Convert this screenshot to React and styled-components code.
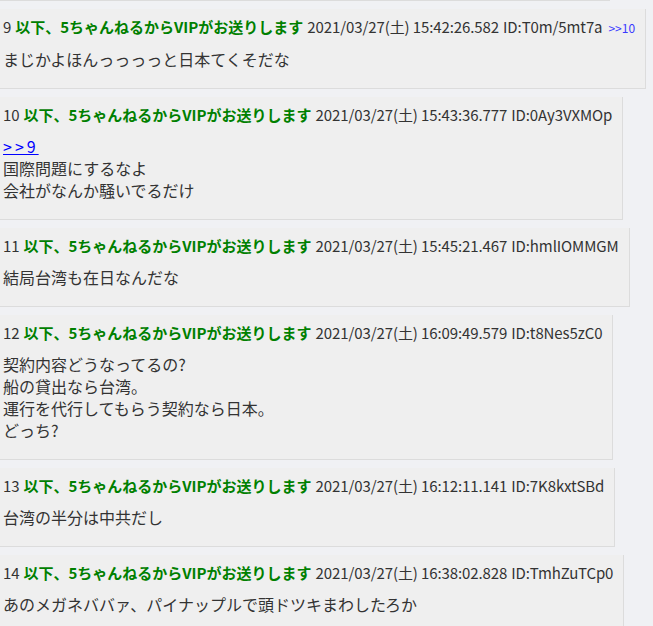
import styled, { createGlobalStyle } from "styled-components";

const GlobalStyle = createGlobalStyle`
  html, body {
    margin: 0;
    padding: 0;
    background: #f0f1f4;
  }
  body {
    font-family: "Noto Sans CJK JP", "Open Sans", sans-serif;
    color: #333;
  }
`;

const posts = [
  {
    no: 9,
    date: "2021/03/27(土) 15:42:26.582",
    id: "T0m/5mt7a",
    replies: [">>10"],
    lines: ["まじかよほんっっっっと日本てくそだな"],
  },
  {
    no: 10,
    date: "2021/03/27(土) 15:43:36.777",
    id: "0Ay3VXMOp",
    anchor: ">>9",
    lines: ["国際問題にするなよ", "会社がなんか騒いでるだけ"],
  },
  {
    no: 11,
    date: "2021/03/27(土) 15:45:21.467",
    id: "hmlIOMMGM",
    lines: ["結局台湾も在日なんだな"],
  },
  {
    no: 12,
    date: "2021/03/27(土) 16:09:49.579",
    id: "t8Nes5zC0",
    lines: [
      "契約内容どうなってるの?",
      "船の貸出なら台湾。",
      "運行を代行してもらう契約なら日本。",
      "どっち?",
    ],
  },
  {
    no: 13,
    date: "2021/03/27(土) 16:12:11.141",
    id: "7K8kxtSBd",
    lines: ["台湾の半分は中共だし"],
  },
  {
    no: 14,
    date: "2021/03/27(土) 16:38:02.828",
    id: "TmhZuTCp0",
    lines: ["あのメガネババァ、パイナップルで頭ドツキまわしたろか"],
  },
];

const App = () => {
  return (
    <Thread>
      <GlobalStyle />
      <PostTail />
      {posts.map(post => (
        <Post key={post.no}>
          <Meta>
            <Number>{post.no}</Number>
            <Name>以下、5ちゃんねるからVIPがお送りします</Name>
            <Stamp>{post.date}</Stamp>
            <Stamp>ID:{post.id}</Stamp>
            {post.replies &&
              post.replies.map(r => (
                <ReplyLink key={r} href="#">
                  {r}
                </ReplyLink>
              ))}
          </Meta>
          <Message>
            {post.anchor && (
              <>
                <Anchor href="#">{post.anchor}</Anchor>
                <br />
              </>
            )}
            {post.lines.map((line, i) => (
              <span key={i}>
                {line}
                {i < post.lines.length - 1 && <br />}
              </span>
            ))}
          </Message>
        </Post>
      ))}
    </Thread>
  );
};

export default App;

const Thread = styled.div`
  display: flex;
  flex-direction: column;
  align-items: flex-start;
  gap: 8px;
  height: 626px;
  overflow: hidden;
`;

const PostTail = styled.div`
  width: 610px;
  height: 0;
  border-bottom: 1px solid #dcdcdc;
`;

const Post = styled.div`
  flex-shrink: 0;
  background: #efefef;
  border-right: 1px solid #dcdcdc;
  border-bottom: 1px solid #dcdcdc;
  padding: 8px 10px 18px 3px;
`;

const Meta = styled.div`
  display: flex;
  align-items: baseline;
  gap: 4px;
  font-size: 15px;
  line-height: 20px;
  color: #333;
  white-space: nowrap;
  margin-bottom: 10px;
`;

const Number = styled.span`
  letter-spacing: -0.1px;
`;

const Name = styled.b`
  color: #008000;
  font-weight: bold;
`;

const Stamp = styled.span`
  letter-spacing: -0.1px;
`;

const ReplyLink = styled.a`
  margin-left: 2px;
  font-size: 12px;
  color: #3a3aff;
  text-decoration: none;
`;

const Message = styled.div`
  font-size: 16px;
  line-height: 22px;
  color: #333;
`;

const Anchor = styled.a`
  color: #0000ff;
  text-decoration: underline;
  letter-spacing: 3px;
`;
